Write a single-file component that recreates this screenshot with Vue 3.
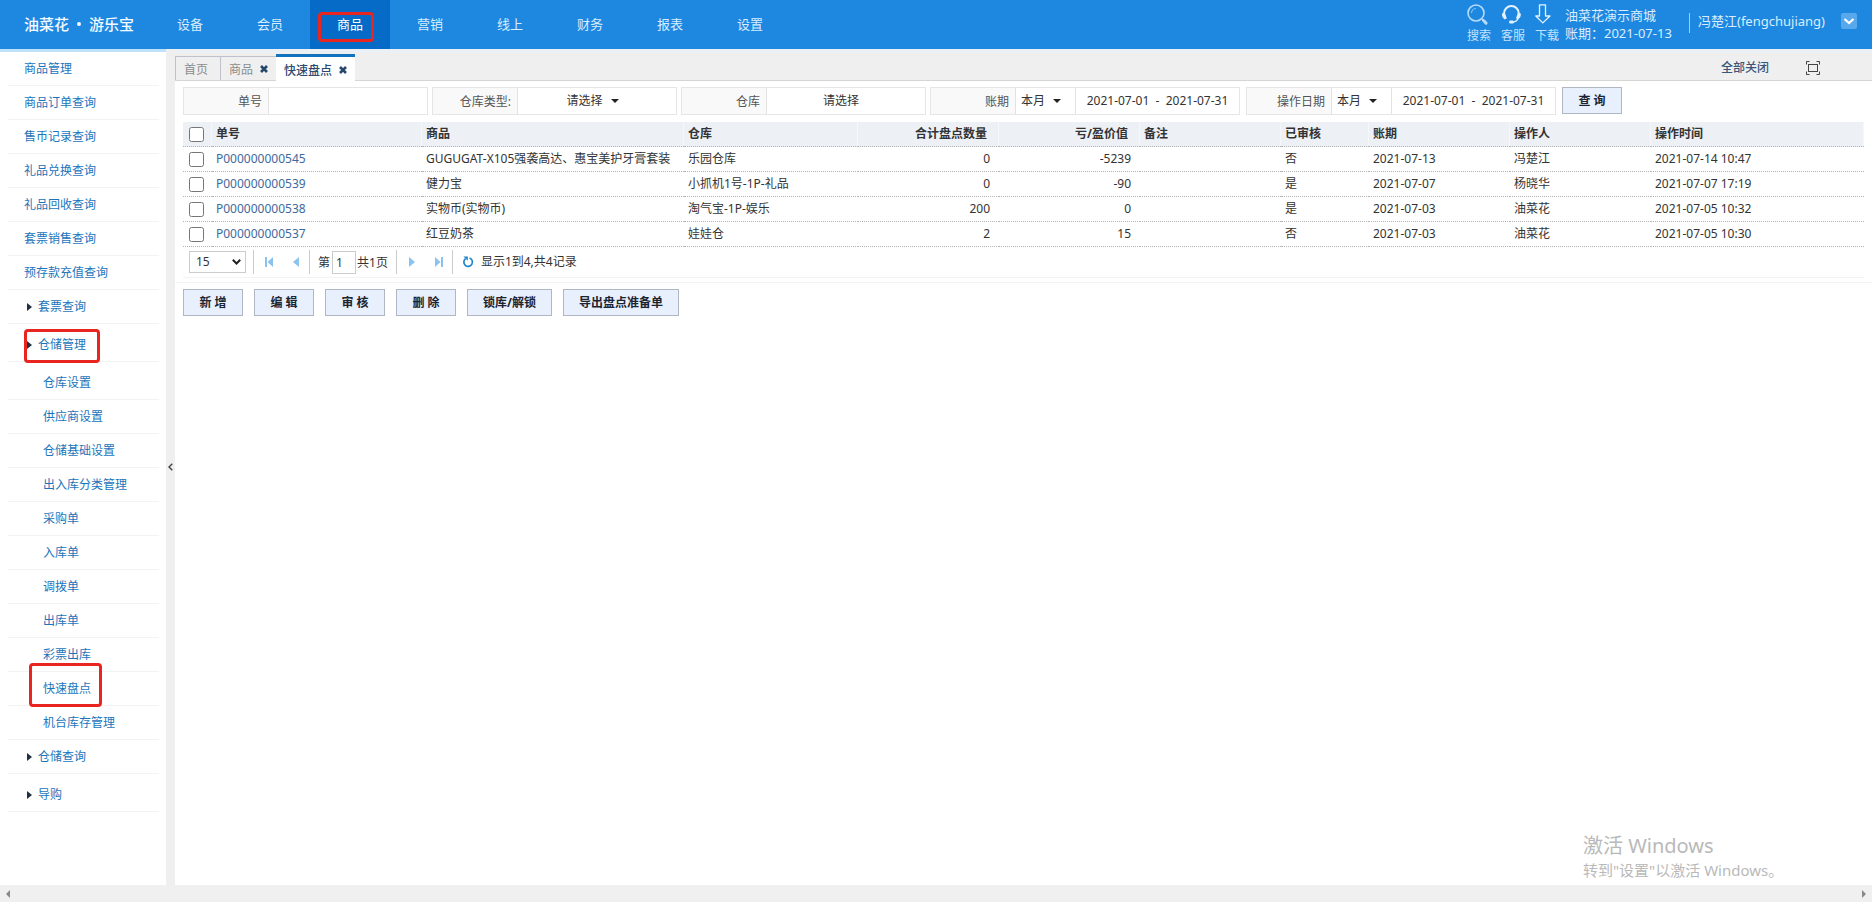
<script setup>
import { ref } from 'vue'

const navItems = ['设备', '会员', '商品', '营销', '线上', '财务', '报表', '设置']

const menu = [
  { text: '商品管理' },
  { text: '商品订单查询' },
  { text: '售币记录查询' },
  { text: '礼品兑换查询' },
  { text: '礼品回收查询' },
  { text: '套票销售查询' },
  { text: '预存款充值查询' },
  { text: '套票查询', kind: 'group' },
  { text: '仓储管理', kind: 'group', spaced: true, mark: 'mark-group' },
  { text: '仓库设置', kind: 'sub', spaced: true },
  { text: '供应商设置', kind: 'sub' },
  { text: '仓储基础设置', kind: 'sub' },
  { text: '出入库分类管理', kind: 'sub' },
  { text: '采购单', kind: 'sub' },
  { text: '入库单', kind: 'sub' },
  { text: '调拨单', kind: 'sub' },
  { text: '出库单', kind: 'sub' },
  { text: '彩票出库', kind: 'sub' },
  { text: '快速盘点', kind: 'sub', mark: 'mark-sub' },
  { text: '机台库存管理', kind: 'sub' },
  { text: '仓储查询', kind: 'group' },
  { text: '导购', kind: 'group', spaced: true },
]

const rows = [
  { id: 'P000000000545', goods: 'GUGUGAT-X105强袭高达、惠宝美护牙膏套装', store: '乐园仓库', count: '0', value: '-5239', audited: '否', period: '2021-07-13', user: '冯楚江', time: '2021-07-14 10:47' },
  { id: 'P000000000539', goods: '健力宝', store: '小抓机1号-1P-礼品', count: '0', value: '-90', audited: '是', period: '2021-07-07', user: '杨晓华', time: '2021-07-07 17:19' },
  { id: 'P000000000538', goods: '实物币(实物币)', store: '淘气宝-1P-娱乐', count: '200', value: '0', audited: '是', period: '2021-07-03', user: '油菜花', time: '2021-07-05 10:32' },
  { id: 'P000000000537', goods: '红豆奶茶', store: '娃娃仓', count: '2', value: '15', audited: '否', period: '2021-07-03', user: '油菜花', time: '2021-07-05 10:30' },
]

const actions = ['新 增', '编 辑', '审 核', '删 除', '锁库/解锁', '导出盘点准备单']

const orderNo = ref('')
const periodRange = ref('2021-07-01  -  2021-07-31')
const operateRange = ref('2021-07-01  -  2021-07-31')
const pageNo = ref('1')
</script>

<template>
  <div class="app">
    <header class="header">
      <div class="logo"><span>油菜花</span><i class="logo-dot"></i><span>游乐宝</span></div>
      <nav class="nav">
        <a v-for="n in navItems" :key="n" href="#" :class="{ active: n === '商品' }">
          {{ n }}<i v-if="n === '商品'" class="mark mark-nav"></i>
        </a>
      </nav>
      <div class="tools">
        <a href="#" class="tool">
          <svg width="22" height="22" viewBox="0 0 22 22" fill="none">
            <circle cx="9" cy="9" r="8" stroke="#b5dbfa" stroke-width="1.6" />
            <path d="M4.5 9A4.6 4.6 0 0 1 9 4.5" stroke="#8cc5f4" stroke-width="1.2" />
            <path d="M15 15l1.4 1.4" stroke="#b5dbfa" stroke-width="1.4" />
            <path d="M16.5 16.5l2.6 2.6" stroke="#b5dbfa" stroke-width="3" stroke-linecap="round" />
          </svg>
          <span>搜索</span>
        </a>
        <a href="#" class="tool">
          <svg width="22" height="22" viewBox="0 0 22 22" fill="none">
            <path d="M3 11V9.5a7.4 7.4 0 0 1 14.8 0V11" stroke="#e4f3ff" stroke-width="2" />
            <path d="M1 9.5l2.8-.8 2 5.6-2 1.2C1.8 14 .6 12 1 9.5zM19.8 9.5l-2.8-.8-2 5.6 2 1.2c2-1.5 3.2-3.500 2.800-6z" fill="#e4f3ff" />
            <path d="M17 14.500c-1 2.700-3 3.500-6 3.500" stroke="#e4f3ff" stroke-width="1.200" />
            <rect x="8" y="16.500" width="5" height="3" rx="1.500" fill="#e4f3ff" />
          </svg>
          <span>客服</span>
        </a>
        <a href="#" class="tool">
          <svg width="22" height="22" viewBox="0 0 22 22" fill="none">
            <path d="M4.500 .800h6v11.200H15L7.800 18.900 .800 12h3.700z" stroke="#e4f3ff" stroke-width="1.300" stroke-linejoin="round" />
          </svg>
          <span>下载</span>
        </a>
      </div>
      <div class="shop">
        <div>油菜花演示商城</div>
        <div>账期：2021-07-13</div>
      </div>
      <div class="user">冯楚江(fengchujiang)</div>
      <button class="user-menu" type="button" aria-label="用户菜单">
        <svg width="16" height="16" viewBox="0 0 16 16" fill="none"><path d="M3.500 6l4.500 4 4.500-4" stroke="#fff" stroke-width="2.200" /></svg>
      </button>
    </header>

    <div class="body">
      <aside class="sidebar">
        <ul>
          <li v-for="m in menu" :key="m.text" :class="[m.kind, { spaced: m.spaced }]">
            <svg v-if="m.kind === 'group'" class="arrow" width="5" height="8" viewBox="0 0 5 8"><path d="M0 0l5 4-5 4z" fill="#222f3e" /></svg>
            <a href="#">{{ m.text }}</a>
            <i v-if="m.mark" class="mark" :class="m.mark"></i>
          </li>
        </ul>
      </aside>

      <div class="splitter">
        <button type="button" aria-label="收起菜单">
          <svg width="5" height="8" viewBox="0 0 5 8" fill="none"><path d="M4.300.7L1 4l3.300 3.300" stroke="#444" stroke-width="1.400" /></svg>
        </button>
      </div>

      <main class="main">
        <div class="tabs">
          <div class="tab"><a href="#">首页</a></div>
          <div class="tab">
            <a href="#">商品</a>
            <button type="button" aria-label="关闭商品"><svg width="8" height="8" viewBox="0 0 8 8"><path d="M1 1l6 6M7 1L1 7" stroke="#25476b" stroke-width="2.600" /></svg></button>
          </div>
          <div class="tab current">
            <a href="#">快速盘点</a>
            <button type="button" aria-label="关闭快速盘点"><svg width="8" height="8" viewBox="0 0 8 8"><path d="M1 1l6 6M7 1L1 7" stroke="#25476b" stroke-width="2.600" /></svg></button>
          </div>
          <button class="close-all" type="button">全部关闭</button>
          <button class="full" type="button" aria-label="全屏">
            <svg width="14" height="14" viewBox="0 0 14 14" fill="none" stroke="#444" stroke-width="1">
              <rect x="2.500" y="3.500" width="9" height="7" />
              <path d="M.5 3.500v-3h3M10.500.5h3v3M13.500 10.500v3h-3M3.500 13.500h-3v-3" />
            </svg>
          </button>
        </div>

        <form class="filters" @submit.prevent>
          <div class="field">
            <label for="f-no">单号</label>
            <input id="f-no" v-model="orderNo" class="wide" type="text" />
          </div>
          <div class="field">
            <label for="f-type">仓库类型:</label>
            <div class="pick wide">
              <select id="f-type"><option>请选择</option></select>
              <svg class="caret" width="8" height="4" viewBox="0 0 8 4"><path d="M0 0h8L4 4z" fill="#222" /></svg>
            </div>
          </div>
          <div class="field">
            <label for="f-store">仓库</label>
            <div class="pick wide">
              <select id="f-store"><option>请选择</option></select>
            </div>
          </div>
          <div class="field">
            <label for="f-period">账期</label>
            <div class="pick small">
              <select id="f-period"><option>本月</option></select>
              <svg class="caret" width="8" height="4" viewBox="0 0 8 4"><path d="M0 0h8L4 4z" fill="#222" /></svg>
            </div>
            <input v-model="periodRange" class="range" type="text" aria-label="账期范围" />
          </div>
          <div class="field">
            <label for="f-date">操作日期</label>
            <div class="pick small">
              <select id="f-date"><option>本月</option></select>
              <svg class="caret" width="8" height="4" viewBox="0 0 8 4"><path d="M0 0h8L4 4z" fill="#222" /></svg>
            </div>
            <input v-model="operateRange" class="range" type="text" aria-label="操作日期范围" />
          </div>
          <button class="btn" type="submit">查 询</button>
        </form>

        <div class="grid">
          <table>
            <colgroup>
              <col class="c-check" /><col class="c-id" /><col class="c-goods" /><col class="c-store" />
              <col class="c-mid" /><col class="c-mid" /><col class="c-mid" /><col class="c-audit" />
              <col class="c-mid" /><col class="c-mid" /><col />
            </colgroup>
            <thead>
              <tr>
                <th class="check"><input type="checkbox" aria-label="全选" /></th>
                <th>单号</th>
                <th>商品</th>
                <th>仓库</th>
                <th class="num">合计盘点数量</th>
                <th class="num">亏/盈价值</th>
                <th>备注</th>
                <th>已审核</th>
                <th>账期</th>
                <th>操作人</th>
                <th>操作时间</th>
              </tr>
            </thead>
            <tbody>
              <tr v-for="r in rows" :key="r.id">
                <td class="check"><input type="checkbox" :aria-label="r.id" /></td>
                <td><a href="#">{{ r.id }}</a></td>
                <td><div class="clip">{{ r.goods }}</div></td>
                <td>{{ r.store }}</td>
                <td class="num">{{ r.count }}</td>
                <td class="num">{{ r.value }}</td>
                <td></td>
                <td>{{ r.audited }}</td>
                <td>{{ r.period }}</td>
                <td>{{ r.user }}</td>
                <td>{{ r.time }}</td>
              </tr>
            </tbody>
          </table>

          <div class="pager">
            <div class="size">
              <select aria-label="每页条数"><option>15</option></select>
              <svg width="9" height="6" viewBox="0 0 9 6" fill="none"><path d="M.8.800l3.700 3.700L8.200.8" stroke="#222" stroke-width="2" /></svg>
            </div>
            <i class="sep"></i>
            <button type="button" aria-label="首页">
              <svg width="8" height="10" viewBox="0 0 8 10" fill="#8cc3ee"><path d="M0 0h2v10H0zM8 0v10L2.500 5z" /></svg>
            </button>
            <button type="button" aria-label="上一页">
              <svg width="8" height="10" viewBox="0 0 8 10" fill="#8cc3ee"><path d="M7 0v10L1 5z" /></svg>
            </button>
            <i class="sep"></i>
            <label class="page-no">第<input v-model="pageNo" type="text" />共1页</label>
            <i class="sep"></i>
            <button type="button" aria-label="下一页">
              <svg width="8" height="10" viewBox="0 0 8 10" fill="#8cc3ee"><path d="M1 0v10l6-5z" /></svg>
            </button>
            <button type="button" aria-label="末页">
              <svg width="8" height="10" viewBox="0 0 8 10" fill="#8cc3ee"><path d="M6 0h2v10H6zM0 0v10l5.500-5z" /></svg>
            </button>
            <i class="sep"></i>
            <button class="reload" type="button" aria-label="刷新">
              <svg width="12" height="12" viewBox="0 0 12 12" fill="none"><path d="M7.500 2A4.300 4.300 0 1 1 3.500 2.700" stroke="#1f83c8" stroke-width="1.700" /><path d="M1.500.5h4.300v4.300z" fill="#1f83c8" /></svg>
            </button>
            <span>显示1到4,共4记录</span>
          </div>
        </div>

        <div class="actions">
          <button v-for="a in actions" :key="a" class="btn" type="button">{{ a }}</button>
        </div>
      </main>
    </div>

    <div class="hscroll">
      <svg width="4" height="8" viewBox="0 0 4 8"><path d="M4 0v8L0 4z" fill="#8a8a8a" /></svg>
      <svg width="4" height="8" viewBox="0 0 4 8"><path d="M0 0v8l4-4z" fill="#8a8a8a" /></svg>
    </div>

    <div class="watermark">
      <div class="wm-title">激活 Windows</div>
      <div>转到"设置"以激活 Windows。</div>
    </div>
  </div>
</template>

<style>
body {
  background: #fff;
}
</style>

<style scoped>
.app {
  position: relative;
  display: flex;
  flex-direction: column;
  min-height: 100vh;
  font-family: "Noto Sans", "Noto Sans CJK SC", sans-serif;
  font-size: 12px;
  line-height: 16px;
  color: #333;
}
.app * {
  box-sizing: border-box;
}
a {
  color: inherit;
  text-decoration: none;
}
button,
input,
select {
  font: inherit;
  color: inherit;
  margin: 0;
}
button {
  padding: 0;
  border: 0;
  background: none;
  cursor: pointer;
}
svg {
  display: block;
  flex: none;
}

.header {
  display: flex;
  align-items: flex-start;
  height: 49px;
  padding-right: 15px;
  background: #1e88e1;
  color: #d8edff;
  font-size: 13px;
}
.logo {
  display: flex;
  align-items: center;
  width: 150px;
  height: 48px;
  padding-left: 24px;
  font-size: 15px;
  font-weight: 500;
  color: #f2f9ff;
}
.logo-dot {
  width: 4px;
  height: 4px;
  margin: 0 8px;
  border-radius: 2px;
  background: #f2f9ff;
}
.nav {
  display: flex;
  height: 49px;
}
.nav a {
  position: relative;
  width: 80px;
  line-height: 48px;
  text-align: center;
}
.nav a.active {
  background: #066bc7;
  color: #fff;
}
.mark {
  position: absolute;
  border: 3px solid #e8251f;
  border-radius: 4px;
  pointer-events: none;
}
.mark-nav {
  left: 8px;
  top: 12px;
  width: 56px;
  height: 30px;
}
.mark-group {
  left: 24px;
  top: 5px;
  width: 76px;
  height: 34px;
  z-index: 1;
}
.mark-sub {
  left: 29px;
  top: -9px;
  width: 73px;
  height: 44px;
  z-index: 1;
}
.tools {
  display: flex;
  gap: 10px;
  margin-left: auto;
  padding-top: 4px;
  font-size: 12px;
}
.tool {
  width: 24px;
  color: #c3e2fc;
}
.tool span {
  display: block;
  margin-top: 2px;
}
.shop {
  width: 124px;
  margin-left: 6px;
  padding-top: 6px;
  line-height: 18px;
}
.user {
  margin-top: 13px;
  width: 152px;
  height: 20px;
  padding-left: 8px;
  border-left: 1px solid #a4d0f5;
  line-height: 16px;
}
.user-menu {
  margin-top: 13px;
  border-radius: 2px;
  background: #58a8ec;
}

.body {
  display: flex;
  flex: 1;
}
.sidebar {
  width: 166px;
  border-top: 3px solid #bfe2fb;
  background: #fff;
}
.sidebar ul {
  margin: 0;
  padding: 0;
  list-style: none;
}
.sidebar li {
  position: relative;
  display: flex;
  align-items: center;
  padding: 0 7px 0 24px;
  line-height: 34px;
  color: #1b75bb;
}
.sidebar li::after {
  content: "";
  position: absolute;
  left: 8px;
  right: 7px;
  bottom: 0;
  border-bottom: 1px solid #f3f3f3;
}
.sidebar li.group {
  padding-left: 27px;
  gap: 6px;
}
.sidebar li.sub {
  padding-left: 43px;
}
.sidebar li.spaced {
  padding-top: 4px;
}
.splitter {
  display: flex;
  align-items: center;
  justify-content: center;
  width: 9px;
  background: #efefef;
}

.main {
  flex: 1;
  min-width: 0;
}
.tabs {
  display: flex;
  align-items: flex-end;
  height: 32px;
  border-bottom: 1px solid #d5d5d5;
  background: #efefef;
  box-shadow: inset 0 3px 0 #e9f1f7;
  color: #8c8c8c;
}
.tab {
  display: flex;
  align-items: center;
  gap: 7px;
  height: 24px;
  padding: 3px 8px 0 8px;
  border: 1px solid #bfc2cc;
  border-width: 1px 0 0 1px;
}
.tab:first-child {
  padding-right: 12px;
}
.tab.current {
  height: 27px;
  margin-bottom: -1px;
  border: 0;
  border-top: 3px solid #1173bd;
  background: #fff;
  color: #2b4a70;
  font-weight: 500;
}
.tab button {
  margin-bottom: 2px;
}
.close-all {
  margin: 0 37px 4px auto;
  color: #3a5578;
  font-weight: 500;
}
.full {
  margin: 0 52px 5px 0;
}

.filters {
  display: flex;
  flex-wrap: wrap;
  gap: 4px;
  padding: 6px 8px 7px;
}
.field {
  display: flex;
  height: 28px;
  border: 1px solid #e6e6e6;
  background: #f9f9f9;
}
.field:nth-child(5) {
  margin-left: 2px;
}
.field label {
  width: 84px;
  padding-right: 6px;
  line-height: 27px;
  text-align: right;
  color: #555;
}
.field input,
.pick {
  border: 0;
  border-left: 1px solid #e2e2e2;
  background: #fff;
  text-align: center;
}
.field .wide {
  width: 159px;
}
.field .small {
  width: 60px;
}
.field .range {
  width: 164px;
  padding: 0;
  white-space: pre;
}
.pick {
  display: flex;
  align-items: center;
  justify-content: center;
  padding-right: 9px;
}
.pick select {
  appearance: none;
  padding: 0;
  border: 0;
  background: none;
}
.pick .caret {
  margin-left: 7px;
}
.btn {
  height: 27px;
  min-width: 60px;
  padding: 0 15px;
  border: 1px solid #b0b6c2;
  background: #e8f0fd;
  color: #1c2430;
  font-weight: 700;
}
.filters .btn {
  margin-left: 2px;
}

.grid {
  padding: 0 8px;
  border-bottom: 1px solid #f3f3f3;
}
table {
  width: 100%;
  border-collapse: separate;
  border-spacing: 0;
  table-layout: fixed;
}
.c-check { width: 29px; }
.c-id { width: 210px; }
.c-goods { width: 262px; }
.c-store { width: 174px; }
.c-mid { width: 141px; }
.c-audit { width: 88px; }
th,
td {
  height: 25px;
  padding: 0 4px;
  border-bottom: 1px dotted #b4b4b4;
  text-align: left;
  white-space: nowrap;
}
th {
  background: #edf1f6;
  box-shadow: inset -1px 0 0 #f5f7fa;
  font-weight: 700;
}
td a {
  color: #41699b;
}
.check {
  padding: 0 0 0 6px;
}
.check input {
  display: block;
  width: 15px;
  height: 15px;
}
.num {
  padding-right: 9px;
  text-align: right;
}
th.num {
  padding-right: 12px;
}
.clip {
  margin-right: 5px;
  overflow: hidden;
}

.pager {
  display: flex;
  align-items: center;
  height: 31px;
  margin-bottom: 4px;
  padding-left: 6px;
  border-bottom: 1px solid #f3f3f3;
}
.size {
  display: flex;
  align-items: center;
  margin-right: 7px;
}
.size select {
  appearance: none;
  width: 57px;
  height: 22px;
  padding: 0 6px;
  border: 1px solid #ccc;
  border-radius: 0;
  background: #fff;
}
.size svg {
  margin-left: -14px;
  margin-right: 5px;
  pointer-events: none;
}
.sep {
  width: 1px;
  height: 24px;
  background: #ccc;
}
.pager button {
  width: 22px;
  height: 22px;
  margin: 0 2px 0 3px;
  display: flex;
  align-items: center;
  justify-content: center;
}
.pager .sep + button {
  margin-left: 4px;
}
.page-no {
  padding: 0 8px;
}
.page-no input {
  width: 24px;
  height: 23px;
  margin: 0 1px 0 2px;
  padding: 0 3px;
  border: 1px solid #ccc;
}
.actions {
  display: flex;
  flex-wrap: wrap;
  gap: 11px;
  padding: 6px 8px;
}

.hscroll {
  display: flex;
  align-items: center;
  justify-content: space-between;
  height: 17px;
  padding: 0 6px;
  background: #f0f0f0;
}
.watermark {
  position: absolute;
  right: 88px;
  bottom: 22px;
  width: 201px;
  font-size: 15px;
  line-height: 20px;
  color: #b9b9b9;
  white-space: nowrap;
}
.wm-title {
  font-size: 20px;
  line-height: 28px;
}
</style>
